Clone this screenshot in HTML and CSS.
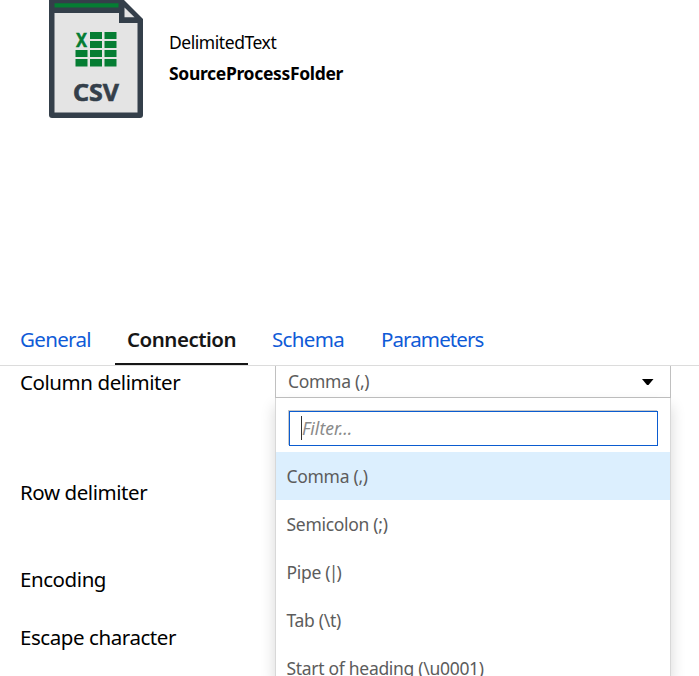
FILE: index.html
```html
<!DOCTYPE html>
<html lang="en">
<head>
<meta charset="utf-8">
<title>SourceProcessFolder</title>
<link rel="stylesheet" href="styles.css">
</head>
<body>
<header class="header">
  <svg class="file-icon" width="94" height="118" viewBox="0 0 94 118" aria-hidden="true">
    <path d="M0 0H75L94 19V115a3 3 0 0 1-3 3H3a3 3 0 0 1-3-3Z" fill="#343f4a"/>
    <path d="M5.500 13H70v10h18.500v89.500H5.500Z" fill="#e4e4e4"/>
    <path d="M5.500 3.300H69.500v4.200H5.500Z" fill="#057d33"/>
    <path d="M75.500 7.500v9.800h10Z" fill="#e4e4e4"/>
    <path d="M41 32h12v7H41zM55.500 32h12v7h-12zM41 41h12v7H41zM55.500 41h12v7h-12zM26.500 50h12v7h-12zM41 50h12v7H41zM55.500 50h12v7h-12zM26.500 59h12v7.500h-12zM41 59h12v7.500H41zM55.500 59h12v7.500h-12z" fill="#057d33"/>
    <text class="icon-x" x="27" y="46.500" textLength="11" lengthAdjust="spacingAndGlyphs">X</text>
    <text class="icon-csv" x="24" y="100.500" textLength="46" lengthAdjust="spacingAndGlyphs">CSV</text>
  </svg>
  <div class="titles">
    <div class="type">DelimitedText</div>
    <div class="name">SourceProcessFolder</div>
  </div>
</header>
<nav class="tabs">
  <a class="tab general">General</a>
  <a class="tab active">Connection</a>
  <a class="tab schema">Schema</a>
  <a class="tab params">Parameters</a>
</nav>
<main class="form">
  <div class="labels">
    <div class="label column">Column delimiter</div>
    <div class="label row">Row delimiter</div>
    <div class="label encoding">Encoding</div>
    <div class="label escape">Escape character</div>
  </div>
  <div class="picker">
    <div class="select"><span>Comma (,)</span>
      <svg width="12" height="7" viewBox="0 0 12 7"><path d="M0 0h11.500L6.500 6H5Z"/></svg>
    </div>
    <div class="menu">
      <div class="filter"><span class="caret"></span><span class="placeholder">Filter...</span></div>
      <div class="option selected">Comma (,)</div>
      <div class="option semi">Semicolon (;)</div>
      <div class="option pipe">Pipe <span>(|)</span></div>
      <div class="option">Tab (\t)</div>
      <div class="option start">Start of heading (\u0001)</div>
    </div>
  </div>
</main>
</body>
</html>
```

FILE: styles.css
```css
* { box-sizing: border-box; }
body {
  margin: 0;
  height: 676px;
  overflow: hidden;
  background: #fff;
  color: #000;
  font-family: "Noto Sans", "Open Sans", sans-serif;
  display: flex;
  flex-direction: column;
}
.header {
  height: 315px;
  flex: none;
  display: flex;
  align-items: flex-start;
  padding-left: 49px;
}
.file-icon { flex: none; display: block; }
.icon-x { font: 700 19px "Noto Sans", sans-serif; fill: #057d33; stroke: #057d33; stroke-width: 0.5px; }
.icon-csv { font: 700 24px "Noto Sans", sans-serif; fill: #343f4a; stroke: #343f4a; stroke-width: 0.6px; }
.titles { padding: 27px 0 0 26px; line-height: 31px; white-space: nowrap; }
.type { font-size: 17.500px; letter-spacing: -0.45px; }
.name { font-size: 17.500px; font-weight: 700; letter-spacing: -0.33px; }
.tabs {
  height: 51px;
  flex: none;
  display: flex;
  padding-left: 8px;
  border-bottom: 1px solid #dcdcdc;
}
.tab {
  height: 50px;
  line-height: 48px;
  padding: 0 12px;
  font-size: 20.500px;
  letter-spacing: -0.65px;
  color: #0f5bd7;
  white-space: nowrap;
}
.general { width: 107px; }
.active {
  width: 133px;
  color: #161616;
  font-weight: 600;
  letter-spacing: -0.5px;
  border-bottom: 2px solid #161616;
}
.schema { width: 109px; margin-left: 12px; }
.params { letter-spacing: -0.9px; }
.form {
  flex: 1;
  min-height: 0;
  display: grid;
  grid-template-columns: 275px 396px;
}
.labels { padding: 2px 0 0 20px; }
.label {
  line-height: 28px;
  font-size: 20.500px;
  letter-spacing: -0.43px;
  white-space: nowrap;
}
.row { margin-top: 82px; }
.encoding { margin-top: 59px; }
.escape { margin-top: 30px; letter-spacing: -0.43px; }
.picker { position: relative; color: #5c5c5c; font-size: 17.500px; letter-spacing: -0.3px; }
.select {
  height: 32px;
  display: flex;
  align-items: center;
  justify-content: space-between;
  padding: 0 16px 2px 12px;
  border: 1px solid #c0c0c0;
  border-top: 0;
}
.select svg { fill: #000; margin-top: 4px; }
.menu {
  position: absolute;
  top: 32px;
  left: 0;
  width: 396px;
  height: 278px;
  overflow: hidden;
  padding-top: 13px;
  background: #fff;
  border: solid #d8d8d8;
  border-width: 0 1px;
  box-shadow: 0 8px 14px rgba(0, 0, 0, 0.16);
}
.filter {
  height: 35px;
  margin: 0 12px 6px 13px;
  display: flex;
  align-items: center;
  padding: 0 0 1px 11px;
  border: 1px solid #0b5cd0;
  box-shadow: -1px -1px 0 #c8c8c8;
}
.caret { width: 1px; height: 24px; background: #333; }
.placeholder { color: #8a8a8a; font-style: italic; letter-spacing: 0; }
.option {
  height: 48px;
  line-height: 48px;
  padding-left: 10.500px;
  white-space: nowrap;
}
.pipe span { letter-spacing: -1.8px; }
.selected { background: #dceffe; }
```
